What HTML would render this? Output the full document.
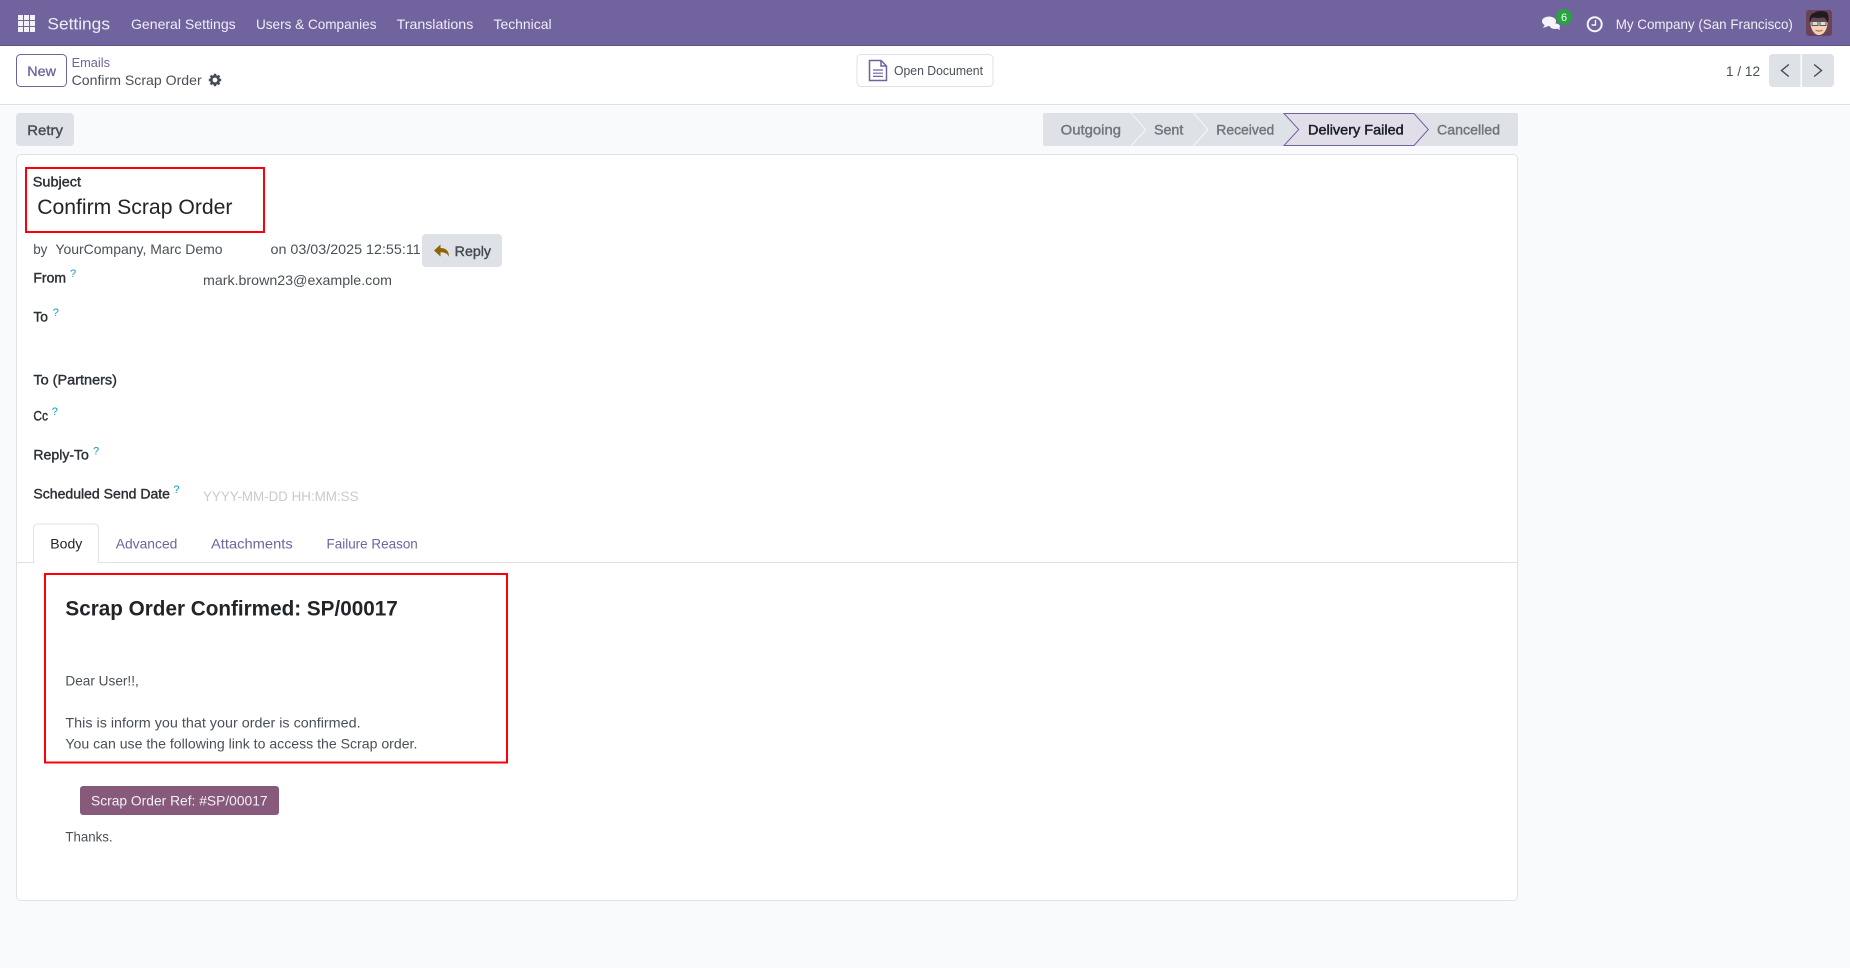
<!DOCTYPE html>
<html lang="en">
<head>
<meta charset="utf-8">
<title>Confirm Scrap Order</title>
<style>
html,body{margin:0;padding:0;width:1850px;height:968px;overflow:hidden;background:#f9fafb}
svg{display:block}
text{font-family:"Liberation Sans",sans-serif;font-size:14px;fill:#495057}
.n{fill:#f0eef5;font-size:14px}
.l{fill:#2b3036;stroke:#2b3036;stroke-width:.4;font-size:14px}
.p{fill:#71639e}
.m{fill:#454b52;stroke:#454b52;stroke-width:.4}
.s{fill:#6f757b;stroke:#6f757b;stroke-width:.4}
.q{fill:#0d9dc0;font-size:11px}
</style>
</head>
<body>
<svg width="1850" height="968" viewBox="0 0 1850 968" xmlns="http://www.w3.org/2000/svg">
<rect width="1850" height="968" fill="#f9fafb"/>
<!-- navbar -->
<rect width="1850" height="46" fill="#71639e"/>
<rect y="45" width="1850" height="1" fill="#5f5387"/>
<g fill="#f3f1f7">
<rect x="18" y="15" width="5" height="5"/><rect x="24" y="15" width="5" height="5"/><rect x="30" y="15" width="5" height="5"/>
<rect x="18" y="21" width="5" height="5"/><rect x="24" y="21" width="5" height="5"/><rect x="30" y="21" width="5" height="5"/>
<rect x="18" y="27" width="5" height="5"/><rect x="24" y="27" width="5" height="5"/><rect x="30" y="27" width="5" height="5"/>
</g>
<text x="47.4" y="29.5" class="n" style="font-size:17px" textLength="62.6" lengthAdjust="spacingAndGlyphs">Settings</text>
<text x="131" y="29" class="n" textLength="104.7" lengthAdjust="spacingAndGlyphs">General Settings</text>
<text x="256" y="29" class="n" textLength="120.5" lengthAdjust="spacingAndGlyphs">Users &amp; Companies</text>
<text x="396.6" y="29" class="n" textLength="76.7" lengthAdjust="spacingAndGlyphs">Translations</text>
<text x="493.5" y="29" class="n" textLength="58.1" lengthAdjust="spacingAndGlyphs">Technical</text>
<!-- chat icon -->
<g fill="#f5f4f8">
<ellipse cx="1549" cy="21.3" rx="7" ry="4.8"/>
<path d="M1545 24.500l-2 3.500 5.500-2z"/>
<ellipse cx="1555" cy="26.200" rx="5" ry="2.800"/>
<path d="M1556 28l4 2-1-4z"/>
</g>
<circle cx="1564" cy="17" r="8" fill="#27a33f"/>
<text x="1564" y="21" text-anchor="middle" style="font-size:11px;fill:#fff">6</text>
<!-- clock -->
<circle cx="1594.700" cy="24.200" r="7" fill="none" stroke="#f5f4f8" stroke-width="2"/>
<path d="M1595.500 20v5h-4" fill="none" stroke="#f5f4f8" stroke-width="1.400"/>
<text x="1615.7" y="29" class="n" textLength="177.2" lengthAdjust="spacingAndGlyphs">My Company (San Francisco)</text>
<!-- avatar -->
<rect x="1806" y="10" width="26" height="26" rx="3" fill="#6a4359"/>
<path d="M1810.500 22c0 8 4 13 8.500 13s8.500-5 8.500-13z" fill="#f6d2b4"/>
<path d="M1810 23c-1.500-6 1-9.500 4-10 3-2.500 10-2.500 13 -.5 2 3 2 7 .5 10.500-1-3-2-5-4-5.500-3 .5-8 .5-11 0-1.500 1-2 3-2.500 5.500z" fill="#1f1c1e"/>
<rect x="1812" y="21.500" width="6" height="4" fill="#d9ddd8" stroke="#55554f" stroke-width="1"/>
<rect x="1820" y="21.500" width="6" height="4" fill="#d9ddd8" stroke="#55554f" stroke-width="1"/>
<path d="M1815.500 30c2 1.500 5 1.500 7 0" fill="none" stroke="#9c5a4a" stroke-width="1"/>
<!-- control panel -->
<rect y="46" width="1850" height="58" fill="#fff"/>
<rect y="104" width="1850" height="1" fill="#dee2e6"/>
<rect x="16.500" y="54.500" width="50" height="32" rx="4" fill="#fff" stroke="#71639e"/>
<text x="27.300" y="76" class="p" textLength="28.700" lengthAdjust="spacingAndGlyphs" style="stroke:#71639e;stroke-width:.3">New</text>
<text x="71.600" y="66.800" class="p" textLength="38.400" lengthAdjust="spacingAndGlyphs" style="font-size:13px">Emails</text>
<text x="71.600" y="85" textLength="130.100" lengthAdjust="spacingAndGlyphs">Confirm Scrap Order</text>
<!-- gear -->
<g transform="translate(215 80)">
<circle r="3.700" fill="none" stroke="#454b52" stroke-width="2.600"/>
<g stroke="#454b52" stroke-width="2.400">
<path d="M0-6.200V-4M0 6.200V4M-6.200 0H-4M6.200 0H4M-4.400-4.400L-2.900-2.900M4.400 4.400L2.900 2.900M-4.400 4.400L-2.900 2.900M4.400-4.400L2.900-2.900"/>
</g>
</g>
<!-- open document -->
<rect x="857" y="54.500" width="136" height="32" rx="4" fill="#fff" stroke="#e0dfe8"/>
<path d="M869.500 60.500h11.500l5.500 5.500v14.500h-17z" fill="#fff" stroke="#71639e" stroke-width="1.500"/>
<path d="M881 60.500v5.500h5.500" fill="none" stroke="#71639e" stroke-width="1.500"/>
<path d="M873 70h10M873 73.200h10M873 76.400h10" stroke="#71639e" stroke-width="1.200"/>
<text x="894" y="75" textLength="89" lengthAdjust="spacingAndGlyphs" style="font-size:13px">Open Document</text>
<!-- pager -->
<text x="1726" y="76" textLength="34" lengthAdjust="spacingAndGlyphs">1 / 12</text>
<path d="M1769 58a4 4 0 0 1 4-4h27.500v33H1773a4 4 0 0 1-4-4z" fill="#dee2e6"/>
<path d="M1802 54h28a4 4 0 0 1 4 4v25a4 4 0 0 1-4 4h-28z" fill="#dee2e6"/>
<path d="M1788.800 64.500l-7.300 6 7.300 6M1814.200 64.500l7.300 6-7.300 6" fill="none" stroke="#3f454c" stroke-width="1.300"/>
<!-- retry -->
<rect x="16" y="113" width="58" height="33" rx="4" fill="#dee2e6"/>
<text x="27.300" y="135" class="m" textLength="35.600" lengthAdjust="spacingAndGlyphs">Retry</text>
<!-- statusbar -->
<rect x="1043" y="113" width="475" height="33" rx="2" fill="#dee2e6"/>
<path d="M1131 113l14.700 16.500-14.700 16.500M1193.300 113l14.700 16.500-14.700 16.500" fill="none" stroke="#f6f7f8" stroke-width="1"/>
<path d="M1284 113.500h130l14.300 16-14.300 16h-130l14.700-16z" fill="#e1deea" stroke="#71639e" stroke-width="1"/>
<text x="1060.700" y="134.700" class="s" textLength="60.300" lengthAdjust="spacingAndGlyphs">Outgoing</text>
<text x="1154" y="134.700" class="s" textLength="29.300" lengthAdjust="spacingAndGlyphs">Sent</text>
<text x="1216.300" y="134.700" class="s" textLength="58" lengthAdjust="spacingAndGlyphs">Received</text>
<text x="1308" y="134.700" textLength="95.700" lengthAdjust="spacingAndGlyphs" style="fill:#1b1e24;stroke:#1b1e24;stroke-width:.45">Delivery Failed</text>
<text x="1437" y="134.700" class="s" textLength="63" lengthAdjust="spacingAndGlyphs">Cancelled</text>
<!-- card -->
<rect x="16.500" y="154.500" width="1501" height="746" rx="4" fill="#fff" stroke="#dfe2e6"/>
<!-- red box 1 -->
<rect x="26" y="168" width="238" height="64" fill="none" stroke="#fb0007" stroke-width="2"/>
<text x="32.800" y="186.500" class="l" textLength="48.200" lengthAdjust="spacingAndGlyphs">Subject</text>
<text x="37.200" y="214" textLength="195.300" lengthAdjust="spacingAndGlyphs" style="font-size:21.500px;fill:#212529">Confirm Scrap Order</text>
<text x="33.200" y="254" textLength="14.200" lengthAdjust="spacingAndGlyphs">by</text>
<text x="55.400" y="254" textLength="167.200" lengthAdjust="spacingAndGlyphs">YourCompany, Marc Demo</text>
<text x="270.500" y="254" textLength="150.200" lengthAdjust="spacingAndGlyphs">on 03/03/2025 12:55:11</text>
<rect x="422" y="234" width="80" height="33" rx="4" fill="#dee2e6"/>
<path d="M434 250.500l6.500-6v3.500c4.500 0 8.500 2 8.500 8.800-1.500-3.500-4.500-4.600-8.500-4.600v4.300z" fill="#8f6508"/>
<text x="454.700" y="256" class="m" textLength="36.300" lengthAdjust="spacingAndGlyphs">Reply</text>
<!-- fields -->
<text x="33.400" y="282.500" class="l" textLength="32.600" lengthAdjust="spacingAndGlyphs">From</text>
<text x="70" y="277" class="q">?</text>
<text x="203" y="285" textLength="189" lengthAdjust="spacingAndGlyphs">mark.brown23@example.com</text>
<text x="33.400" y="321.500" class="l" textLength="14.600" lengthAdjust="spacingAndGlyphs">To</text>
<text x="52.800" y="316" class="q">?</text>
<text x="33.400" y="384.500" class="l" textLength="83.600" lengthAdjust="spacingAndGlyphs">To (Partners)</text>
<text x="33.400" y="420.500" class="l" textLength="14.600" lengthAdjust="spacingAndGlyphs">Cc</text>
<text x="51.800" y="415" class="q">?</text>
<text x="33.400" y="459.500" class="l" textLength="55.500" lengthAdjust="spacingAndGlyphs">Reply-To</text>
<text x="93" y="454.500" class="q">?</text>
<text x="33.400" y="498.500" class="l" textLength="136.600" lengthAdjust="spacingAndGlyphs">Scheduled Send Date</text>
<text x="173.400" y="493" class="q">?</text>
<text x="203" y="501" textLength="155.500" lengthAdjust="spacingAndGlyphs" style="fill:#c6cbd0">YYYY-MM-DD HH:MM:SS</text>
<!-- tabs -->
<rect x="16.500" y="562" width="1501" height="1" fill="#dee2e6"/>
<path d="M33.500 563v-35a4 4 0 0 1 4-4h57a4 4 0 0 1 4 4v35" fill="#fff" stroke="#dee2e6"/>
<rect x="34" y="561" width="64" height="3" fill="#fff"/>
<text x="50.300" y="548.700" textLength="32" lengthAdjust="spacingAndGlyphs" style="fill:#212529">Body</text>
<text x="115.700" y="548.700" class="p" textLength="61.700" lengthAdjust="spacingAndGlyphs">Advanced</text>
<text x="211" y="548.700" class="p" textLength="81.700" lengthAdjust="spacingAndGlyphs">Attachments</text>
<text x="326.500" y="548.700" class="p" textLength="91.300" lengthAdjust="spacingAndGlyphs">Failure Reason</text>
<!-- red box 2 -->
<rect x="45" y="574" width="462" height="188.500" fill="none" stroke="#fb0007" stroke-width="2"/>
<text x="65.400" y="615.700" textLength="332.400" lengthAdjust="spacingAndGlyphs" style="font-size:21px;font-weight:bold;fill:#212529">Scrap Order Confirmed: SP/00017</text>
<text x="65.400" y="685.500" textLength="73.400" lengthAdjust="spacingAndGlyphs">Dear User!!,</text>
<text x="65.400" y="727.500" textLength="295.200" lengthAdjust="spacingAndGlyphs">This is inform you that your order is confirmed.</text>
<text x="65.400" y="748.500" textLength="352" lengthAdjust="spacingAndGlyphs">You can use the following link to access the Scrap order.</text>
<rect x="80" y="786" width="199" height="29" rx="3" fill="#875a7b"/>
<text x="91" y="805.700" textLength="176.600" lengthAdjust="spacingAndGlyphs" style="fill:#f6eff4">Scrap Order Ref: #SP/00017</text>
<text x="65.400" y="841.700" textLength="47.200" lengthAdjust="spacingAndGlyphs">Thanks.</text>
</svg>
</body>
</html>
